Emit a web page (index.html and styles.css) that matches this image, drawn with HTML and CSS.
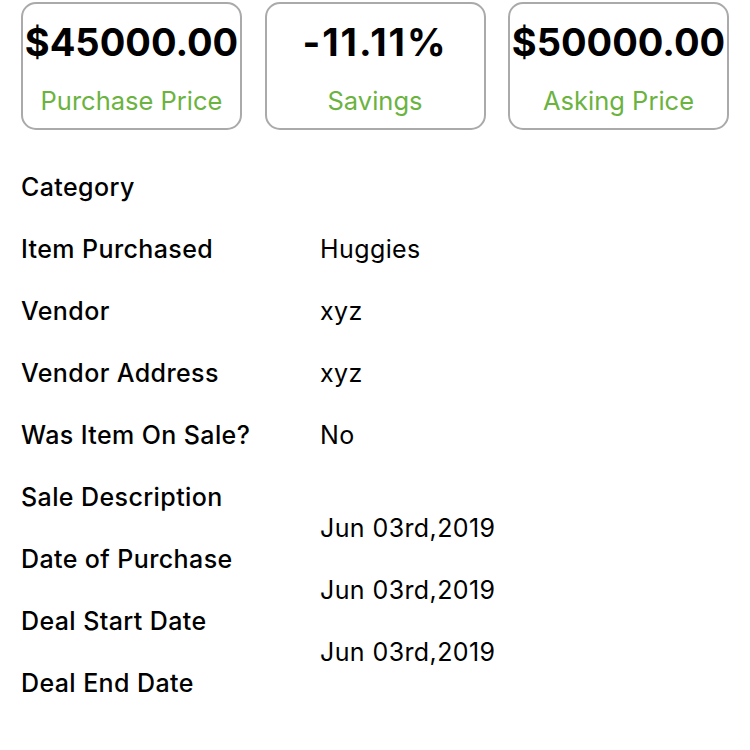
FILE: index.html
```html
<!DOCTYPE html>
<html>
<head>
<meta charset="utf-8">
<link rel="stylesheet" href="styles.css">
</head>
<body>
<div class="page">
  <div class="cards">
    <div class="card">
      <div class="amount">$45000.00</div>
      <div class="caption">Purchase Price</div>
    </div>
    <div class="card">
      <div class="amount amount-pct">-11.11%</div>
      <div class="caption">Savings</div>
    </div>
    <div class="card">
      <div class="amount">$50000.00</div>
      <div class="caption">Asking Price</div>
    </div>
  </div>
  <div class="details">
    <div class="row"><div class="label">Category</div><div class="value"></div></div>
    <div class="row"><div class="label">Item Purchased</div><div class="value">Huggies</div></div>
    <div class="row"><div class="label">Vendor</div><div class="value">xyz</div></div>
    <div class="row"><div class="label">Vendor Address</div><div class="value">xyz</div></div>
    <div class="row"><div class="label">Was Item On Sale?</div><div class="value">No</div></div>
    <div class="row"><div class="label">Sale Description</div><div class="value"></div></div>
    <div class="row"><div class="label">Date of Purchase</div><div class="value raised">Jun 03rd,2019</div></div>
    <div class="row"><div class="label">Deal Start Date</div><div class="value raised">Jun 03rd,2019</div></div>
    <div class="row"><div class="label">Deal End Date</div><div class="value raised">Jun 03rd,2019</div></div>
  </div>
</div>
</body>
</html>
```
FILE: styles.css
```css
html, body {
  margin: 0;
  padding: 0;
  background: #ffffff;
}
body {
  font-family: Inter, "Liberation Sans", sans-serif;
  color: #000000;
}
.page {
  padding: 2px 20px 0 21px;
}
.cards {
  display: grid;
  grid-template-columns: repeat(3, 221px);
  column-gap: 22.5px;
}
.card {
  height: 128px;
  box-sizing: border-box;
  border: 2px solid #aaaaaa;
  border-radius: 15px;
  display: flex;
  flex-direction: column;
  align-items: center;
}
.amount {
  margin-top: 16px;
  font-size: 38px;
  line-height: 44px;
  font-weight: 700;
  white-space: nowrap;
}
.amount-pct {
  letter-spacing: 2px;
}
.caption {
  margin-top: 22px;
  font-size: 25.5px;
  line-height: 30px;
  color: #6bb33f;
}
.details {
  margin-top: 26px;
}
.row {
  display: flex;
  align-items: center;
  height: 62px;
  font-size: 25px;
  letter-spacing: 0.4px;
}
.label {
  width: 299px;
  font-weight: 500;
}
.value {
  font-weight: 400;
}
.value.raised {
  margin-top: -62px;
}
```
